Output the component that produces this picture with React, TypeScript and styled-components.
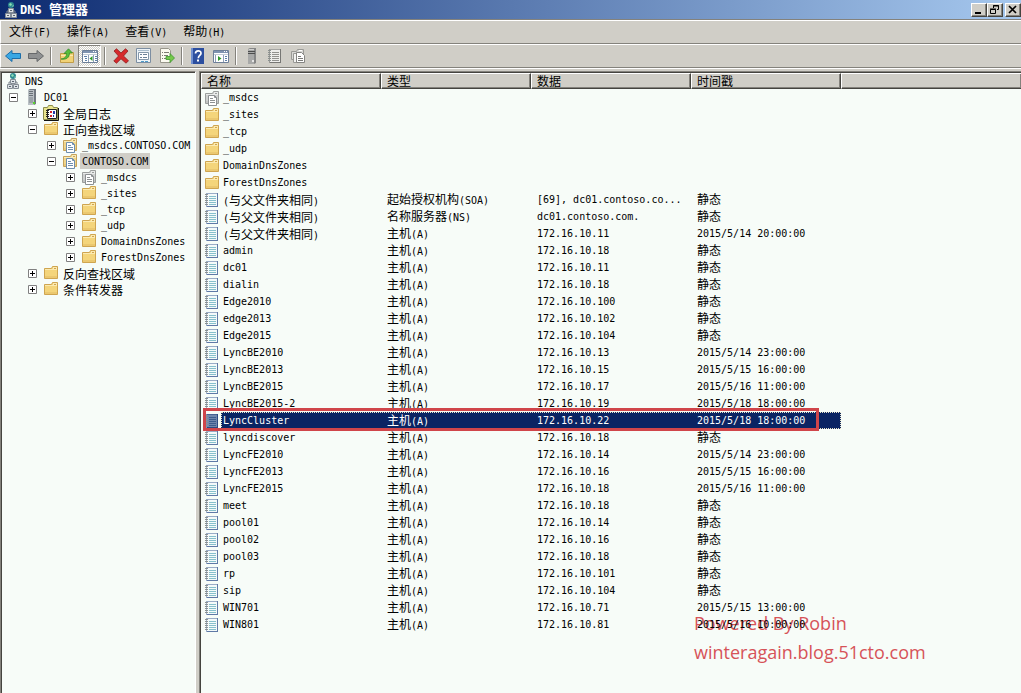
import React, { useState } from "react";
import styled, { createGlobalStyle, css } from "styled-components";

const face = "#d0cec7";
const shade = "#84827c";
const dark = "#45443f";
const paper = "#f7fcf8";
const navy = "#0a2463";

const GlobalStyle = createGlobalStyle`
  * { box-sizing: border-box; }
  body {
    margin: 0;
    background: ${face};
    color: #000;
    font: 10px/16px "DejaVu Sans Mono", "Noto Sans CJK SC", monospace;
  }
  button { font: inherit; color: inherit; padding: 0; border: 0; background: none; }
  svg { display: block; flex: none; }
`;

const Window = styled.div`
  display: flex;
  flex-direction: column;
  min-height: 100vh;
  background: ${face};
`;

const TitleBar = styled.header`
  display: flex;
  align-items: center;
  gap: 1px;
  height: 20px;
  padding-left: 3px;
  background: linear-gradient(to right, #0c2a70, #a6c8ee);
  border-bottom: 1px solid ${shade};
`;

const Title = styled.h1`
  flex: 1;
  margin: 0;
  color: #fff;
  font: bold 12px/18px "DejaVu Sans Mono", "Noto Sans CJK SC", monospace;
`;

const CaptionButtons = styled.div`
  display: flex;
`;

const CaptionButton = styled.button<{ $apart?: boolean }>`
  display: grid;
  place-items: center;
  width: 16px;
  height: 14px;
  margin-left: ${(p) => (p.$apart ? 2 : 0)}px;
  background: ${face};
  border: 1px solid;
  border-color: #fff ${dark} ${dark} #fff;
  box-shadow: inset -1px -1px ${shade};
`;

const Bar = styled.div`
  display: flex;
  align-items: center;
  height: 24px;
  border-top: 1px solid #fff;
  border-left: 1px solid #fff;
  border-bottom: 1px solid ${shade};
`;

const MenuButton = styled.button`
  padding: 0 8px;
  line-height: 20px;
`;

const Tool = styled.button<{ $pressed?: boolean }>`
  display: grid;
  place-items: center;
  width: 23px;
  height: 22px;
  ${(p) =>
    p.$pressed &&
    css`
      background: repeating-conic-gradient(#fff 0 25%, ${face} 0 50%) 0 0 / 2px 2px;
      border: 1px solid;
      border-color: ${shade} #fff #fff ${shade};
    `}
`;

const Divider = styled.span`
  width: 2px;
  height: 18px;
  margin: 0 3px;
  border-left: 1px solid ${shade};
  border-right: 1px solid #fff;
`;

const Panes = styled.main`
  flex: 1;
  display: flex;
  gap: 3px;
  padding-top: 2px;
  border-top: 1px solid #fff;
`;

const Pane = styled.section`
  position: relative;
  border: 1px solid ${shade};
  border-right-color: #fff;
  border-bottom: 0;
  box-shadow: inset 1px 1px ${dark};
  padding: 1px 0 0 1px;
  background: ${paper};
`;

const TreePane = styled(Pane)`
  flex: none;
  width: 196px;
`;

const ListPane = styled(Pane)`
  flex: 1;
  min-width: 0;
  border-right: 0;
`;

const TreeList = styled.ul<{ $nested?: boolean }>`
  list-style: none;
  margin: 0;
  padding: 0 0 0 ${(p) => (p.$nested ? 19 : 0)}px;
`;

const RootList = styled(TreeList)`
  padding-left: 3px;
`;

const TreeRow = styled.div<{ $root?: boolean }>`
  display: flex;
  align-items: center;
  height: 16px;
  margin-left: ${(p) => (p.$root ? 0 : -19)}px;
`;

const Toggle = styled.button`
  flex: none;
  width: 9px;
  height: 9px;
  margin: 0 6px 0 4px;
`;

const NodeLabel = styled.span<{ $selected?: boolean }>`
  margin-left: 2px;
  padding: 0 2px;
  white-space: nowrap;
  background: ${(p) => (p.$selected ? face : "transparent")};
  line-height: 17px;
  height: 16px;
`;

const Han = styled.span`
  font-family: "Noto Sans CJK SC", sans-serif;
  font-size: 12px;
`;

const TitleHan = styled(Han)`
  font-size: 13px;
`;

const RecordTable = styled.table`
  position: relative;
  width: 100%;
  table-layout: fixed;
  border-collapse: separate;
  border-spacing: 0;
  text-align: left;
`;

const HeadCell = styled.th`
  padding: 0 0 0 5px;
  font-weight: normal;
  background: ${face};
  border-top: 1px solid #fff;
  border-left: 1px solid #fff;
  border-bottom: 1px solid ${dark};
  border-right: 1px solid ${dark};
  box-shadow: inset -1px -1px ${shade};
  &:last-child { border-right: 0; }
`;

const HeadText = styled.div`
  height: 14px;
  line-height: 14px;
`;

const Row = styled.tr<{ $selected?: boolean }>`
  position: relative;
  color: ${(p) => (p.$selected ? "#fff" : "#000")};
`;

const Cell = styled.td<{ $selected?: boolean }>`
  height: 17px;
  padding: 0 0 0 6px;
  background: ${(p) => (p.$selected ? navy : "transparent")};
`;

const NameCell = styled.td`
  padding: 0 0 0 3px;
`;

const CellText = styled.div`
  display: flex;
  align-items: center;
  height: 17px;
  line-height: 17px;
  white-space: pre;
`;

const RecordName = styled.span<{ $selected?: boolean }>`
  flex: 1;
  height: 17px;
  margin-left: 1px;
  padding-left: 2px;
  background: ${(p) => (p.$selected ? navy : "transparent")};
`;

const FocusRing = styled.span`
  position: absolute;
  inset: 0 180px 0 20px;
  border: 1px dotted #e8e4c8;
`;

const Highlight = styled.span`
  position: absolute;
  inset: -4px 202px -2px 2px;
  border: 3px solid #d0454a;
`;

const Watermark = styled.p`
  position: absolute;
  top: 537px;
  left: 494px;
  margin: 0;
  color: #d65358;
  font: 18px/29px "Open Sans", "Noto Sans", sans-serif;
  white-space: pre;
`;

const Mixed = ({ children, title }: { children: string; title?: boolean }) => {
  const Cjk = title ? TitleHan : Han;
  return (
    <>
      {children
        .split(/([\u4e00-\u9fff]+)/)
        .filter(Boolean)
        .map((part, i) => (/[\u4e00-\u9fff]/.test(part) ? <Cjk key={i}>{part}</Cjk> : part))}
    </>
  );
};

/* ---------- icons ---------- */

type IconName =
  | "dns" | "server" | "log" | "folder" | "zone" | "delegated" | "record" | "recordSelected"
  | "back" | "forward" | "up" | "tree" | "delete" | "props" | "export" | "help" | "pane"
  | "tower" | "list" | "pages";

const Folder = ({ fill, edge, light }: { fill: string; edge: string; light: string }) => (
  <>
    <path d="M1.500 3.500h7l1-2h5v12h-13z" fill={fill} stroke={edge} />
    <path d="M10 2h4v2h-4z" fill={light} />
    <path d="M11 3h2v1h-2z" fill={edge} />
    <path d="M2 4h12v1H2z" fill={light} />
    <path d="M2 11h12v2H2z" fill={edge} opacity=".25" />
  </>
);

const Sheet = ({ line }: { line: string }) => (
  <>
    <path d="M4.500 5.500h6l2 2v8h-8z" fill="#fff" stroke={line} />
    <path d="M10.500 5.500v2h2" fill="none" stroke={line} />
    <path d="M6 8.500h3M6 10.500h5M6 12.500h5" stroke={line} />
  </>
);

const Notebook = ({ page, line, edge }: { page: string; line: string; edge: string }) => (
  <>
    <path d="M3 1h11v14H3z" fill={page} />
    <path d="M3 1.500h11M2.500 1v14" stroke={edge} opacity=".6" />
    <path d="M13.500 1v14M3 14.500h11" stroke={edge} />
    <path d="M5 4.500h7M5 6.500h7M5 8.500h7M5 10.500h7M5 12.500h7" stroke={line} />
    <path d="M1 2.500h3M1 4.500h3M1 6.500h3M1 8.500h3M1 10.500h3M1 12.500h3" stroke="#8b9190" />
  </>
);

const Panel = ({ arrow }: { arrow: "left" | "right" }) => (
  <>
    <path d="M.5 2.500h15v12H.5z" fill="#fff" stroke="#6d7f98" />
    <path d="M1 3h14v2H1z" fill="#7f93b0" />
    <path d="M11 3.500h1M13 3.500h1" stroke="#fff" />
    <path d="M1 6.500h14" stroke="#c3ccd8" />
    {arrow === "left" ? (
      <>
        <path d="M6.500 7v7M11.500 7v7" stroke="#8fa0b8" />
        <path d="M2 8.500h3M3 10.500h2M3 12.500h2M13 8.500h2M13 10.500h2M13 12.500h2" stroke="#5c7fa9" />
        <path d="M10.500 8v5l-3-2.500z" fill="#30982c" />
      </>
    ) : (
      <>
        <path d="M2.500 7v7M10.500 7v7" stroke="#8fa0b8" />
        <path d="M12 8.500h2M12 10.500h2M12 12.500h2" stroke="#5c7fa9" />
        <path d="M5 8v5l3.500-2.500z" fill="#30982c" />
      </>
    )}
  </>
);

const art: Record<IconName, React.ReactNode> = {
  dns: (
    <>
      <circle cx="8" cy="3" r="3" fill="#2d8790" />
      <path d="M6 2l2-1 1 2-2 1zM9 4l2-1-1 2z" fill="#8ce0b4" />
      <path d="M8 6v3M4 11V9h8v2" fill="none" stroke="#7a828a" />
      <path d="M5.500 6.500h5v4h-5zM2.500 11.500h5v4h-5zM8.500 11.500h5v4h-5z" fill="#dde2e6" stroke="#858d95" />
      <path d="M7 8.500h2M4 13.500h2M10 13.500h2" stroke="#59636e" />
    </>
  ),
  server: (
    <>
      <path d="M4 1l2-1h6v15l-2 1H4z" fill="#717980" />
      <path d="M4 1h6v15H4z" fill="#b9c0c4" />
      <path d="M5 2.500h4M5 4.500h4M5 6.500h4" stroke="#697278" />
      <path d="M5 8h4v6H5z" fill="#9ba3a8" />
      <path d="M9 13h2v2H9z" fill="#58d32e" />
    </>
  ),
  log: (
    <>
      <path d="M.5 2.500h4l1-2h4l1 2h4v12H.5z" fill="#e9e58d" stroke="#8b8c4a" />
      <path d="M1 15.500h14.500V3" fill="none" stroke="#111" />
      <path d="M4.500 4.500h9v9h-9z" fill="#fff" stroke="#222" />
      <path d="M3 5.500h3M3 7.500h3M3 9.500h3M3 11.500h3" stroke="#222" />
      <path d="M7 6h2v2H7zM7 10h2v2H7z" fill="#d3262c" />
      <path d="M10 6h2v3h-2zM10 10h1v2h-1z" fill="#2538a8" />
    </>
  ),
  folder: <Folder fill="#f4d57b" edge="#cfa550" light="#fbeab1" />,
  zone: (
    <>
      <Folder fill="#f0d68c" edge="#c7a35b" light="#f9ebb9" />
      <Sheet line="#6e8eae" />
    </>
  ),
  delegated: (
    <>
      <Folder fill="#cfd1d0" edge="#9b9e9d" light="#e9ebea" />
      <Sheet line="#8c9092" />
    </>
  ),
  record: <Notebook page="#f4fafa" line="#86c0cc" edge="#5f79a6" />,
  recordSelected: <Notebook page="#6f87ad" line="#3c5d8d" edge="#2c4b82" />,
  back: <path d="M.5 8L7 2.500v3h8.500v5H7v3z" fill="#38a7e4" stroke="#1d6ea9" strokeLinejoin="round" />,
  forward: <path d="M15.500 8L9 2.500v3H.5v5H9v3z" fill="#8f9192" stroke="#66686a" strokeLinejoin="round" />,
  up: (
    <>
      <path d="M1.500 5.500h6l1-1h6v10h-13z" fill="#f1d276" stroke="#c29d48" />
      <path d="M2 7.500h12" stroke="#fbeab1" />
      <path d="M2 11c4-.5 5.500-2.500 5.500-5.500H5L9.500.8 13.500 5h-3c0 4.500-3 7-8.500 6z" fill="#58bd3b" stroke="#2e8527" strokeWidth=".7" />
    </>
  ),
  tree: <Panel arrow="left" />,
  pane: <Panel arrow="right" />,
  delete: (
    <path d="M3.500.8L8 5l4.500-4.200L15 3l-4.500 5 5 4.800-2.500 2.400L8 10.800l-4.500 4.400L.8 13l4.700-5L1 3z" fill="#d62a2c" stroke="#8f1d20" strokeWidth=".8" />
  ),
  props: (
    <>
      <path d="M.5 .5h14v14H.5z" fill="#edf3f7" stroke="#7c8ea2" />
      <path d="M2 2.500h11" stroke="#a9bccb" />
      <path d="M2.500 4.500h10v7h-10z" fill="#fff" stroke="#8598aa" />
      <path d="M4 6.500h2M7 6.500h4M4 9.500h2M7 9.500h4" stroke="#6c8197" />
      <path d="M5 13.500h3M9 13.500h3" stroke="#4e9bc9" />
    </>
  ),
  export: (
    <>
      <path d="M1.500.5h8l2 2v12h-10z" fill="#fbfaf0" stroke="#98968b" />
      <path d="M3 4.500h1M5 4.500h5M3 7.500h1M5 7.500h4M3 10.500h1M5 10.500h2" stroke="#7b7b71" />
      <path d="M7 8.500h4v-3l4.500 4.500-4.500 4.500v-3H7z" fill="#75c94b" stroke="#3c962d" strokeWidth=".8" />
    </>
  ),
  help: (
    <>
      <path d="M1 0h13v16H1z" fill="#2c4f9f" />
      <path d="M1 0h2v16H1z" fill="#6f8fd0" />
      <path d="M5.500 5.500C5.500 2 11 2 11 5.200c0 2.300-2.700 2.300-2.700 5" fill="none" stroke="#fff" strokeWidth="1.700" />
      <path d="M7 11.500h2v2H7z" fill="#fff" />
    </>
  ),
  tower: (
    <>
      <path d="M4 1l2-1h6v15l-2 1H4z" fill="#858686" />
      <path d="M4 1h6v15H4z" fill="#a8a9a8" />
      <path d="M4 3.500h7M4 5.500h7" stroke="#4c4d4d" />
      <path d="M5 1.500h5" stroke="#d0d0cf" />
      <path d="M8 12h2v2H8z" fill="#e5e5e5" />
    </>
  ),
  list: <Notebook page="#eeeeec" line="#92928f" edge="#777774" />,
  pages: (
    <>
      <path d="M1.500 3.500h5l1-2h6v10h-12z" fill="#d9d9d6" stroke="#9a9a96" />
      <path d="M9 2.500h3" stroke="#fff" />
      <path d="M3.500 5.500h5v9h-5z" fill="#f3f3f1" stroke="#999995" />
      <path d="M6.500 4.500h5l3 3v7h-8z" fill="#fff" stroke="#858582" />
      <path d="M8 8.500h3M8 10.500h5M8 12.500h5" stroke="#7b7b78" />
    </>
  ),
};

const Icon = ({ name }: { name: IconName }) => (
  <svg width="16" height="16" viewBox="0 0 16 16" aria-hidden="true">
    {art[name]}
  </svg>
);

/* ---------- data ---------- */

type Node = { label: string; icon: IconName; open?: boolean; selected?: boolean; children?: Node[] };

const tree: Node = {
  label: "DNS",
  icon: "dns",
  open: true,
  children: [
    {
      label: "DC01",
      icon: "server",
      open: true,
      children: [
        { label: "全局日志", icon: "log" },
        {
          label: "正向查找区域",
          icon: "folder",
          open: true,
          children: [
            { label: "_msdcs.CONTOSO.COM", icon: "zone" },
            {
              label: "CONTOSO.COM",
              icon: "zone",
              open: true,
              selected: true,
              children: [
                { label: "_msdcs", icon: "delegated" },
                { label: "_sites", icon: "folder" },
                { label: "_tcp", icon: "folder" },
                { label: "_udp", icon: "folder" },
                { label: "DomainDnsZones", icon: "folder" },
                { label: "ForestDnsZones", icon: "folder" },
              ],
            },
          ],
        },
        { label: "反向查找区域", icon: "folder" },
        { label: "条件转发器", icon: "folder" },
      ],
    },
  ],
};

const folders = ["_msdcs", "_sites", "_tcp", "_udp", "DomainDnsZones", "ForestDnsZones"];
const host = "主机(A)";
const fixed = "静态";
const same = "(与父文件夹相同)";

const records: string[][] = [
  [same, "起始授权机构(SOA)", "[69], dc01.contoso.co...", fixed],
  [same, "名称服务器(NS)", "dc01.contoso.com.", fixed],
  [same, host, "172.16.10.11", "2015/5/14 20:00:00"],
  ["admin", host, "172.16.10.18", fixed],
  ["dc01", host, "172.16.10.11", fixed],
  ["dialin", host, "172.16.10.18", fixed],
  ["Edge2010", host, "172.16.10.100", fixed],
  ["edge2013", host, "172.16.10.102", fixed],
  ["Edge2015", host, "172.16.10.104", fixed],
  ["LyncBE2010", host, "172.16.10.13", "2015/5/14 23:00:00"],
  ["LyncBE2013", host, "172.16.10.15", "2015/5/15 16:00:00"],
  ["LyncBE2015", host, "172.16.10.17", "2015/5/16 11:00:00"],
  ["LyncBE2015-2", host, "172.16.10.19", "2015/5/18 18:00:00"],
  ["LyncCluster", host, "172.16.10.22", "2015/5/18 18:00:00"],
  ["lyncdiscover", host, "172.16.10.18", fixed],
  ["LyncFE2010", host, "172.16.10.14", "2015/5/14 23:00:00"],
  ["LyncFE2013", host, "172.16.10.16", "2015/5/15 16:00:00"],
  ["LyncFE2015", host, "172.16.10.18", "2015/5/16 11:00:00"],
  ["meet", host, "172.16.10.18", fixed],
  ["pool01", host, "172.16.10.14", fixed],
  ["pool02", host, "172.16.10.16", fixed],
  ["pool03", host, "172.16.10.18", fixed],
  ["rp", host, "172.16.10.101", fixed],
  ["sip", host, "172.16.10.104", fixed],
  ["WIN701", host, "172.16.10.71", "2015/5/15 13:00:00"],
  ["WIN801", host, "172.16.10.81", "2015/5/16 10:00:00"],
];

const tools: (({ icon: IconName; label: string; pressed?: boolean }) | null)[] = [
  { icon: "back", label: "后退" },
  { icon: "forward", label: "前进" },
  null,
  { icon: "up", label: "上一级" },
  { icon: "tree", label: "控制台树", pressed: true },
  null,
  { icon: "delete", label: "删除" },
  { icon: "props", label: "属性" },
  { icon: "export", label: "导出列表" },
  null,
  { icon: "help", label: "帮助" },
  { icon: "pane", label: "操作窗格" },
  null,
  { icon: "tower", label: "新建服务器" },
  { icon: "list", label: "新建记录" },
  { icon: "pages", label: "新建区域" },
];

const TreeNode = ({ node, root }: { node: Node; root?: boolean }) => {
  const [open, setOpen] = useState(!!node.open);
  return (
    <li>
      <TreeRow $root={root}>
        {!root && (
          <Toggle aria-label={node.label} aria-expanded={open} onClick={() => setOpen(!open)}>
            <svg width="9" height="9" aria-hidden="true">
              <path d="M.5.5h8v8h-8z" fill="#fff" stroke="#808080" />
              <path d={open ? "M2 4.500h5" : "M2 4.500h5M4.500 2v5"} stroke="#000" />
            </svg>
          </Toggle>
        )}
        <Icon name={node.icon} />
        <NodeLabel $selected={node.selected}>
          <Mixed>{node.label}</Mixed>
        </NodeLabel>
      </TreeRow>
      {open && node.children && (
        <TreeList $nested>
          {node.children.map((child) => (
            <TreeNode key={child.label} node={child} />
          ))}
        </TreeList>
      )}
    </li>
  );
};

const RecordRow = ({ cells, icon, selected }: { cells: string[]; icon: IconName; selected?: boolean }) => (
  <Row $selected={selected} aria-selected={selected}>
    <NameCell>
      <CellText>
        <Icon name={icon} />
        <RecordName $selected={selected}>
          <Mixed>{cells[0]}</Mixed>
        </RecordName>
      </CellText>
    </NameCell>
    {[1, 2, 3].map((i) => (
      <Cell key={i} $selected={selected}>
        <CellText>
          <span>
            <Mixed>{cells[i] || ""}</Mixed>
          </span>
        </CellText>
      </Cell>
    ))}
    <Cell>
      {selected && (
        <>
          <FocusRing />
          <Highlight />
        </>
      )}
    </Cell>
  </Row>
);

export default function App() {
  return (
    <Window>
      <GlobalStyle />
      <TitleBar>
        <Icon name="dns" />
        <Title>
          <Mixed title>DNS 管理器</Mixed>
        </Title>
        <CaptionButtons>
          <CaptionButton aria-label="最小化">
            <svg width="10" height="9"><path d="M1 7h6v2H1z" /></svg>
          </CaptionButton>
          <CaptionButton aria-label="还原">
            <svg width="10" height="9">
              <path d="M3.500 3V.5h5v4H7M3 1h6M.5 4.500h5v4h-5zM0 4h6" fill="none" stroke="#000" />
            </svg>
          </CaptionButton>
          <CaptionButton aria-label="关闭" $apart>
            <svg width="10" height="9"><path d="M1 1l7 7M8 1L1 8" stroke="#000" strokeWidth="1.700" /></svg>
          </CaptionButton>
        </CaptionButtons>
      </TitleBar>
      <Bar as="nav">
        {["文件(F)", "操作(A)", "查看(V)", "帮助(H)"].map((m) => (
          <MenuButton key={m}>
            <Mixed>{m}</Mixed>
          </MenuButton>
        ))}
      </Bar>
      <Bar role="toolbar">
        {tools.map((t, i) =>
          t ? (
            <Tool key={i} $pressed={t.pressed} aria-label={t.label} aria-pressed={t.pressed}>
              <Icon name={t.icon} />
            </Tool>
          ) : (
            <Divider key={i} />
          ),
        )}
      </Bar>
      <Panes>
        <TreePane>
          <RootList>
            <TreeNode node={tree} root />
          </RootList>
        </TreePane>
        <ListPane>
          <Watermark>{"Powered By Robin\nwinteragain.blog.51cto.com"}</Watermark>
          <RecordTable>
            <colgroup>
              <col width="180" />
              <col width="150" />
              <col width="160" />
              <col width="150" />
              <col />
            </colgroup>
            <thead>
              <tr>
                {["名称", "类型", "数据", "时间戳", ""].map((h) => (
                  <HeadCell key={h} scope="col">
                    <HeadText>
                      <Mixed>{h}</Mixed>
                    </HeadText>
                  </HeadCell>
                ))}
              </tr>
            </thead>
            <tbody>
              {folders.map((f, i) => (
                <RecordRow key={f} cells={[f]} icon={i === 0 ? "delegated" : "folder"} />
              ))}
              {records.map((r, i) => (
                <RecordRow
                  key={i}
                  cells={r}
                  icon={r[0] === "LyncCluster" ? "recordSelected" : "record"}
                  selected={r[0] === "LyncCluster"}
                />
              ))}
            </tbody>
          </RecordTable>
        </ListPane>
      </Panes>
    </Window>
  );
}
